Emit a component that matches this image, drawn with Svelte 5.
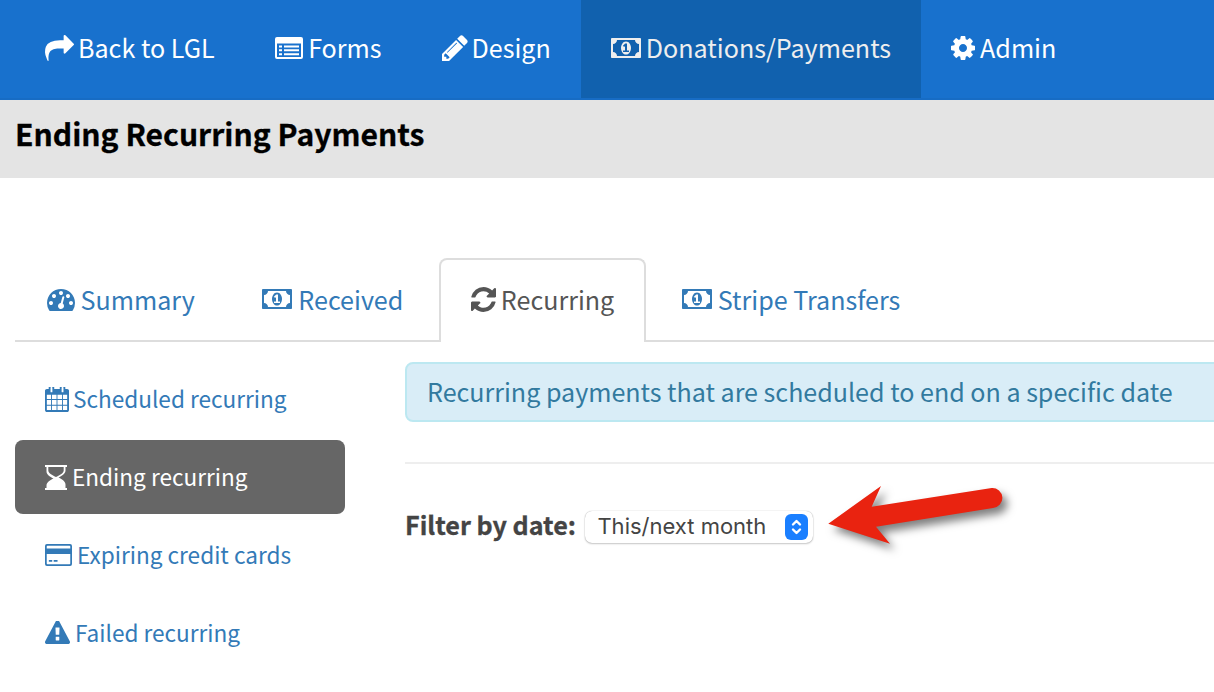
<script lang="ts">
  const icons = {
    share: { box: "0 0 1792 1792", d: "M1792 640q0 26-19 45l-512 512q-19 19-45 19t-45-19-19-45v-256h-224q-98 0-175.500 6t-154 21.500-133 42.500-105.500 69.500-80 101-48.500 138.500-17.500 181q0 55 5 123 0 6 2.500 23.500t2.500 26.500q0 15-8.500 25t-23.500 10q-16 0-28-17-7-9-13-22t-13.500-30-10.500-24q-127-285-127-451 0-199 53-333 162-403 875-403h224v-256q0-26 19-45t45-19 45 19l512 512q19 19 19 45z" },
    list: { box: "0 0 28 22", d: "M2 0h24a2 2 0 0 1 2 2v18a2 2 0 0 1-2 2H2a2 2 0 0 1-2-2V2a2 2 0 0 1 2-2zM2 6.500V20h24V6.500zM4 8.500h3v2H4zM9 8.500h15v2H9zM4 12.300h3v2H4zM9 12.300h15v2H9zM4 16.200h3v2H4zM9 16.200h15v2H9z" },
    pencil: { box: "128 128 1536 1536", d: "M491 1536l91-91-235-235-91 91v107h128v128h107zm523-928q0-22-22-22-10 0-17 7l-542 542q-7 7-7 17 0 22 22 22 10 0 17-7l542-542q7-7 7-17zm-54-192l416 416-832 832h-416v-416zm683 96q0 53-37 90l-166 166-416-416 166-165q36-38 90-38 53 0 91 38l235 234q37 39 37 91z" },
    money: { box: "0 256 1920 1280", d: "M768 1152h384v-96h-128v-448h-114l-148 137 77 80q42-37 55-57h2v288h-128v96zm512-256q0 70-21 142t-59.500 134-101.500 101-138 39-138-39-101.500-101-59.500-134-21-142 21-142 59.500-134 101.500-101 138-39 138 39 101.500 101 59.500 134 21 142zm512 256v-512q-106 0-181-75t-75-181h-1152q0 106-75 181t-181 75v512q106 0 181 75t75 181h1152q0-106 75-181t181-75zm128-832v1152q0 26-19 45t-45 19h-1792q-26 0-45-19t-19-45v-1152q0-26 19-45t45-19h1792q26 0 45 19t19 45z" },
    cog: { box: "128 128 1536 1536", d: "M1152 896q0-106-75-181t-181-75-181 75-75 181 75 181 181 75 181-75 75-181zm512-109v222q0 12-8 23t-20 13l-185 28q-19 54-39 91 35 50 107 138 10 12 10 25t-9 23q-27 37-99 108t-94 71q-12 0-26-9l-138-108q-44 23-91 38-16 136-29 186-7 28-36 28h-222q-14 0-24.500-8.500t-11.500-21.500l-28-184q-49-16-90-37l-141 107q-10 9-25 9-14 0-25-11-126-114-165-168-7-10-7-23 0-12 8-23 15-21 51-66.500t54-70.500q-27-50-41-99l-183-27q-13-2-21-12.500t-8-23.500v-222q0-12 8-23t19-13l186-28q14-46 39-92-40-57-107-138-10-12-10-24 0-10 9-23 26-36 98.500-107.500t94.500-71.500q13 0 26 10l138 107q44-23 91-38 16-136 29-186 7-28 36-28h222q14 0 24.500 8.500t11.500 21.500l28 184q49 16 90 37l142-107q9-9 24-9 13 0 25 10 129 119 165 170 7 8 7 22 0 12-8 23-15 21-51 66.500t-54 70.500q26 50 41 98l183 28q13 2 21 12.500t8 23.500z" },
    gauge: { box: "0 0 1792 1792", d: "M384 1152q0-53-37.500-90.500t-90.500-37.500-90.500 37.500-37.500 90.500 37.500 90.500 90.500 37.500 90.500-37.500 37.500-90.500zm192-448q0-53-37.500-90.500t-90.500-37.500-90.500 37.500-37.500 90.500 37.500 90.500 90.500 37.500 90.500-37.500 37.500-90.500zm428 481l101-382q6-26-7.500-48.500t-38.500-29.500-48 6.500-30 39.500l-101 382q-60 5-107 43.500t-63 98.500q-20 77 20 146t117 89 146-20 89-117q16-60-6-117t-72-91zm660-33q0-53-37.500-90.500t-90.500-37.500-90.500 37.500-37.500 90.500 37.500 90.500 90.500 37.500 90.500-37.500 37.500-90.500zm-640-640q0-53-37.500-90.500t-90.500-37.500-90.500 37.500-37.500 90.500 37.500 90.500 90.500 37.500 90.500-37.500 37.500-90.500zm448 192q0-53-37.500-90.500t-90.500-37.500-90.500 37.500-37.500 90.500 37.500 90.500 90.500 37.500 90.500-37.500 37.500-90.500zm320 448q0 261-141 483-19 29-54 29h-1402q-35 0-54-29-141-221-141-483 0-182 71-348t191-286 286-191 348-71 348 71 286 191 191 286 71 348z" },
    refresh: { box: "128 128 1536 1536", d: "M1639 1056q0 5-1 7-64 268-268 434.500t-478 166.500q-146 0-282.500-55t-243.500-157l-129 129q-19 19-45 19t-45-19-19-45v-448q0-26 19-45t45-19h448q26 0 45 19t19 45-19 45l-137 137q71 66 161 102t187 36q134 0 250-65t186-179q11-17 53-117 8-23 30-23h192q13 0 22.500 9.500t9.500 22.500zm25-800v448q0 26-19 45t-45 19h-448q-26 0-45-19t-19-45 19-45l138-138q-148-137-349-137-134 0-250 65t-186 179q-11 17-53 117-8 23-30 23h-199q-13 0-22.500-9.500t-9.500-22.500v-7q65-268 270-434.500t480-166.500q146 0 284 55.500t245 156.500l130-129q19-19 45-19t45 19 19 45z" },
    calendar: { box: "0 128 1664 1664", d: "M128 1664h288v-288h-288v288zm352 0h320v-288h-320v288zm-352-352h288v-320h-288v320zm352 0h320v-320h-320v320zm-352-384h288v-288h-288v288zm736 736h320v-288h-320v288zm-384-736h320v-288h-320v288zm768 736h288v-288h-288v288zm-384-352h320v-320h-320v320zm-352-864v-288q0-13-9.500-22.500t-22.500-9.500h-64q-13 0-22.500 9.500t-9.500 22.500v288q0 13 9.500 22.500t22.500 9.500h64q13 0 22.500-9.500t9.500-22.500zm736 864h288v-320h-288v320zm-384-384h320v-288h-320v288zm384 0h288v-288h-288v288zm32-480v-288q0-13-9.500-22.500t-22.500-9.500h-64q-13 0-22.500 9.500t-9.500 22.500v288q0 13 9.500 22.500t22.500 9.500h64q13 0 22.500-9.500t9.500-22.500zm384-64v1280q0 52-38 90t-90 38h-1408q-52 0-90-38t-38-90v-1280q0-52 38-90t90-38h128v-96q0-66 47-113t113-47h64q66 0 113 47t47 113v96h384v-96q0-66 47-113t113-47h64q66 0 113 47t47 113v96h128q52 0 90 38t38 90z" },
    hourglass: { box: "0 0 22 25", d: "M0 0h22v2h-1.500v3.500c0 3.500-4 5.500-7 7 3 1.500 7 3.500 7 7V23H22v2H0v-2h1.500v-2.500c0-3.500 4-5.500 7-7-3-1.500-7-3.500-7-7V2H0zM3.300 2v3.500c0 3 4.700 5 7.700 6.500 3-1.500 7.700-3.500 7.700-6.500V2z" },
    card: { box: "0 0 28 22", d: "M2 0h24a2 2 0 0 1 2 2v18a2 2 0 0 1-2 2H2a2 2 0 0 1-2-2V2a2 2 0 0 1 2-2zM1.800 10v9.500c0 .400.300.700.700.700h23c.400 0 .700-.300.700-.700V10zM1.800 2.500v1.900h24.400V2.500c0-.400-.300-.700-.700-.700h-23c-.400 0-.700.300-.700.700zM4 16h3.500v1.800H4zM9 16h4v1.800H9z" },
    warning: { box: "0 64 1792 1664", d: "M1024 1375v-190q0-14-9.500-23.500t-22.500-9.500h-192q-13 0-22.500 9.500t-9.500 23.500v190q0 14 9.500 23.500t22.500 9.500h192q13 0 22.500-9.500t9.500-23.500zm-2-374l18-459q0-12-10-19-13-11-24-11h-220q-11 0-24 11-10 7-10 21l17 457q0 10 10 16.500t24 6.500h185q14 0 23.500-6.500t10.500-16.500zm-14-934l768 1408q35 63-2 126-17 29-46.500 46t-63.500 17h-1536q-34 0-63.500-17t-46.500-46q-37-63-2-126l768-1408q17-31 47-49t65-18 65 18 47 49z" },
  };

  const navItems = [
    { label: "Back to LGL", icon: icons.share, w: 29, h: 29, gap: 4 },
    { label: "Forms", icon: icons.list, w: 28, h: 22, gap: 5.5 },
    { label: "Design", icon: icons.pencil, w: 26, h: 26, gap: 4 },
    { label: "Donations/Payments", icon: icons.money, w: 30, h: 20, gap: 5, active: true },
    { label: "Admin", icon: icons.cog, w: 24, h: 24, gap: 5 },
  ];

  const tabs = [
    { label: "Summary", icon: icons.gauge, w: 28, h: 28, gap: 5.5 },
    { label: "Received", icon: icons.money, w: 30, h: 20, gap: 6 },
    { label: "Recurring", icon: icons.refresh, w: 25, h: 25, gap: 5, active: true },
    { label: "Stripe Transfers", icon: icons.money, w: 30, h: 20, gap: 6 },
  ];

  const pills = [
    { label: "Scheduled recurring", icon: icons.calendar, w: 24, h: 25, gap: 4 },
    { label: "Ending recurring", icon: icons.hourglass, w: 22, h: 25, gap: 5, active: true },
    { label: "Expiring credit cards", icon: icons.card, w: 27, h: 22, gap: 5 },
    { label: "Failed recurring", icon: icons.warning, w: 25, h: 24, gap: 5 },
  ];
</script>

{#snippet icon(item)}
  <svg class="icon" viewBox={item.icon.box} width={item.w} height={item.h} preserveAspectRatio="none" fill="currentColor" fill-rule="evenodd" style:margin-right="{item.gap}px" aria-hidden="true"><path d={item.icon.d} /></svg>
{/snippet}

<div class="page">
  <nav class="topnav">
    {#each navItems as item}
      <a class="nav-item" class:active={item.active} href="#top">
        {@render icon(item)}
        <span>{item.label}</span>
      </a>
    {/each}
  </nav>

  <header class="title-bar">
    <h1>Ending Recurring Payments</h1>
  </header>

  <main class="content">
    <ul class="tabs">
      {#each tabs as tab}
        <li class="tab" class:active={tab.active}>
          {@render icon(tab)}
          <span>{tab.label}</span>
        </li>
      {/each}
    </ul>

    <div class="columns">
      <ul class="pills">
        {#each pills as pill}
          <li class="pill" class:active={pill.active}>
            {@render icon(pill)}
            <span>{pill.label}</span>
          </li>
        {/each}
      </ul>

      <section class="panel">
        <div class="alert">Recurring payments that are scheduled to end on a specific date</div>
        <hr />
        <div class="filter">
          <span class="filter-label">Filter by date:</span>
          <div class="select">
            <span class="select-value">This/next month</span>
            <span class="select-btn">
              <svg viewBox="0 0 23 26" width="23" height="26" fill="none" stroke="#fff" stroke-width="2.400" stroke-linecap="round" stroke-linejoin="round">
                <path d="M8 10.500 11.500 7 15 10.500M8 15.500 11.500 19 15 15.500" />
              </svg>
            </span>
          </div>
        </div>
      </section>
    </div>
  </main>

  <svg class="arrow" viewBox="0 0 200 90" width="200" height="90" aria-hidden="true">
    <path d="M8.300 45.700 61 8 51.700 28.700 171.700 10A10 10 0 0 1 173 30L56 48.700 70 65.700Z" fill="#e92310" />
  </svg>
</div>

<style>
  :global(body) {
    margin: 0;
    background: #fff;
  }

  .page {
    position: relative;
    width: 1214px;
    height: 692px;
    overflow: hidden;
    font-family: "Noto Sans CJK SC", "Noto Sans", sans-serif;
    font-size: 25.1px;
    color: #444;
  }

  ul {
    list-style: none;
    margin: 0;
    padding: 0;
  }

  .icon {
    flex: none;
  }

  .topnav {
    display: flex;
    align-items: stretch;
    height: 98px;
    padding-left: 15px;
    background: #1871cd;
    border-bottom: 2px solid #176cc4;
  }

  .nav-item {
    display: flex;
    align-items: center;
    padding: 0 30px 2px;
    color: #fff;
    text-decoration: none;
  }

  .nav-item span {
    margin-bottom: 2px;
  }

  .nav-item.active {
    background: #1161ae;
    color: #eee;
  }

  .title-bar {
    display: flex;
    align-items: center;
    height: 78px;
    box-sizing: border-box;
    padding: 0 0 12px 15px;
    background: #e4e4e4;
  }

  h1 {
    margin: 0;
    font-size: 30.100px;
    font-weight: 700;
    color: #000;
    line-height: 1;
    -webkit-text-stroke: 0.3px #000;
  }

  .content {
    padding: 80px 0 0 15px;
  }

  .tabs {
    display: flex;
    height: 82px;
    border-bottom: 2px solid #ddd;
  }

  .tab {
    display: flex;
    align-items: center;
    padding: 0 30px 4px;
    margin-right: 3.500px;
    border: 2px solid transparent;
    border-bottom: 0;
    border-radius: 8px 8px 0 0;
    color: #337ab7;
    height: 84px;
    box-sizing: border-box;
  }

  .tab.active {
    border-color: #ddd;
    background: #fff;
    color: #555;
  }

  .columns {
    display: flex;
    gap: 60px;
    margin-top: 20px;
  }

  .pills {
    display: flex;
    flex-direction: column;
    gap: 4px;
    width: 330px;
    flex: none;
  }

  .pill {
    display: flex;
    align-items: center;
    height: 74px;
    padding: 0 30px;
    border-radius: 8px;
    color: #337ab7;
    box-sizing: border-box;
    font-size: 22.600px;
  }

  .pill span {
    margin-bottom: 2px;
  }

  .pill.active {
    background: #666;
    color: #fff;
  }

  .panel {
    flex: 1;
    min-width: 0;
  }

  .alert {
    display: flex;
    align-items: center;
    height: 60px;
    box-sizing: border-box;
    margin-right: -12px;
    padding: 0 0 2px 20px;
    background: #d9edf7;
    border: 2px solid #bce8f1;
    border-radius: 8px;
    color: #327a9f;
    letter-spacing: -0.015px;
  }

  hr {
    height: 2px;
    border: 0;
    margin: 40px 0 0;
    background: #eee;
  }

  .filter {
    display: flex;
    align-items: center;
    gap: 9px;
    margin-top: 47px;
  }

  .filter-label {
    font-weight: 700;
    line-height: 26px;
    margin-bottom: 6px;
    -webkit-text-stroke: 0.3px #444;
  }

  .select {
    display: flex;
    align-items: center;
    justify-content: space-between;
    width: 228px;
    height: 32px;
    box-sizing: border-box;
    padding: 0 5px 0 12.500px;
    background: #fff;
    border-radius: 7px;
    box-shadow: 0 0 1px rgba(0, 0, 0, 0.35), 0 1px 2px rgba(0, 0, 0, 0.2);
    font-family: Inter, "Liberation Sans", sans-serif;
    font-size: 22px;
    color: #444;
  }

  .select-value {
    margin-bottom: 2px;
  }

  .select-btn {
    display: flex;
    width: 23px;
    height: 26px;
    border-radius: 6px;
    background: #1a7fff;
  }

  .arrow {
    position: absolute;
    left: 820px;
    top: 478px;
    filter: drop-shadow(5px 6px 4px rgba(0, 0, 0, 0.5));
  }
</style>
